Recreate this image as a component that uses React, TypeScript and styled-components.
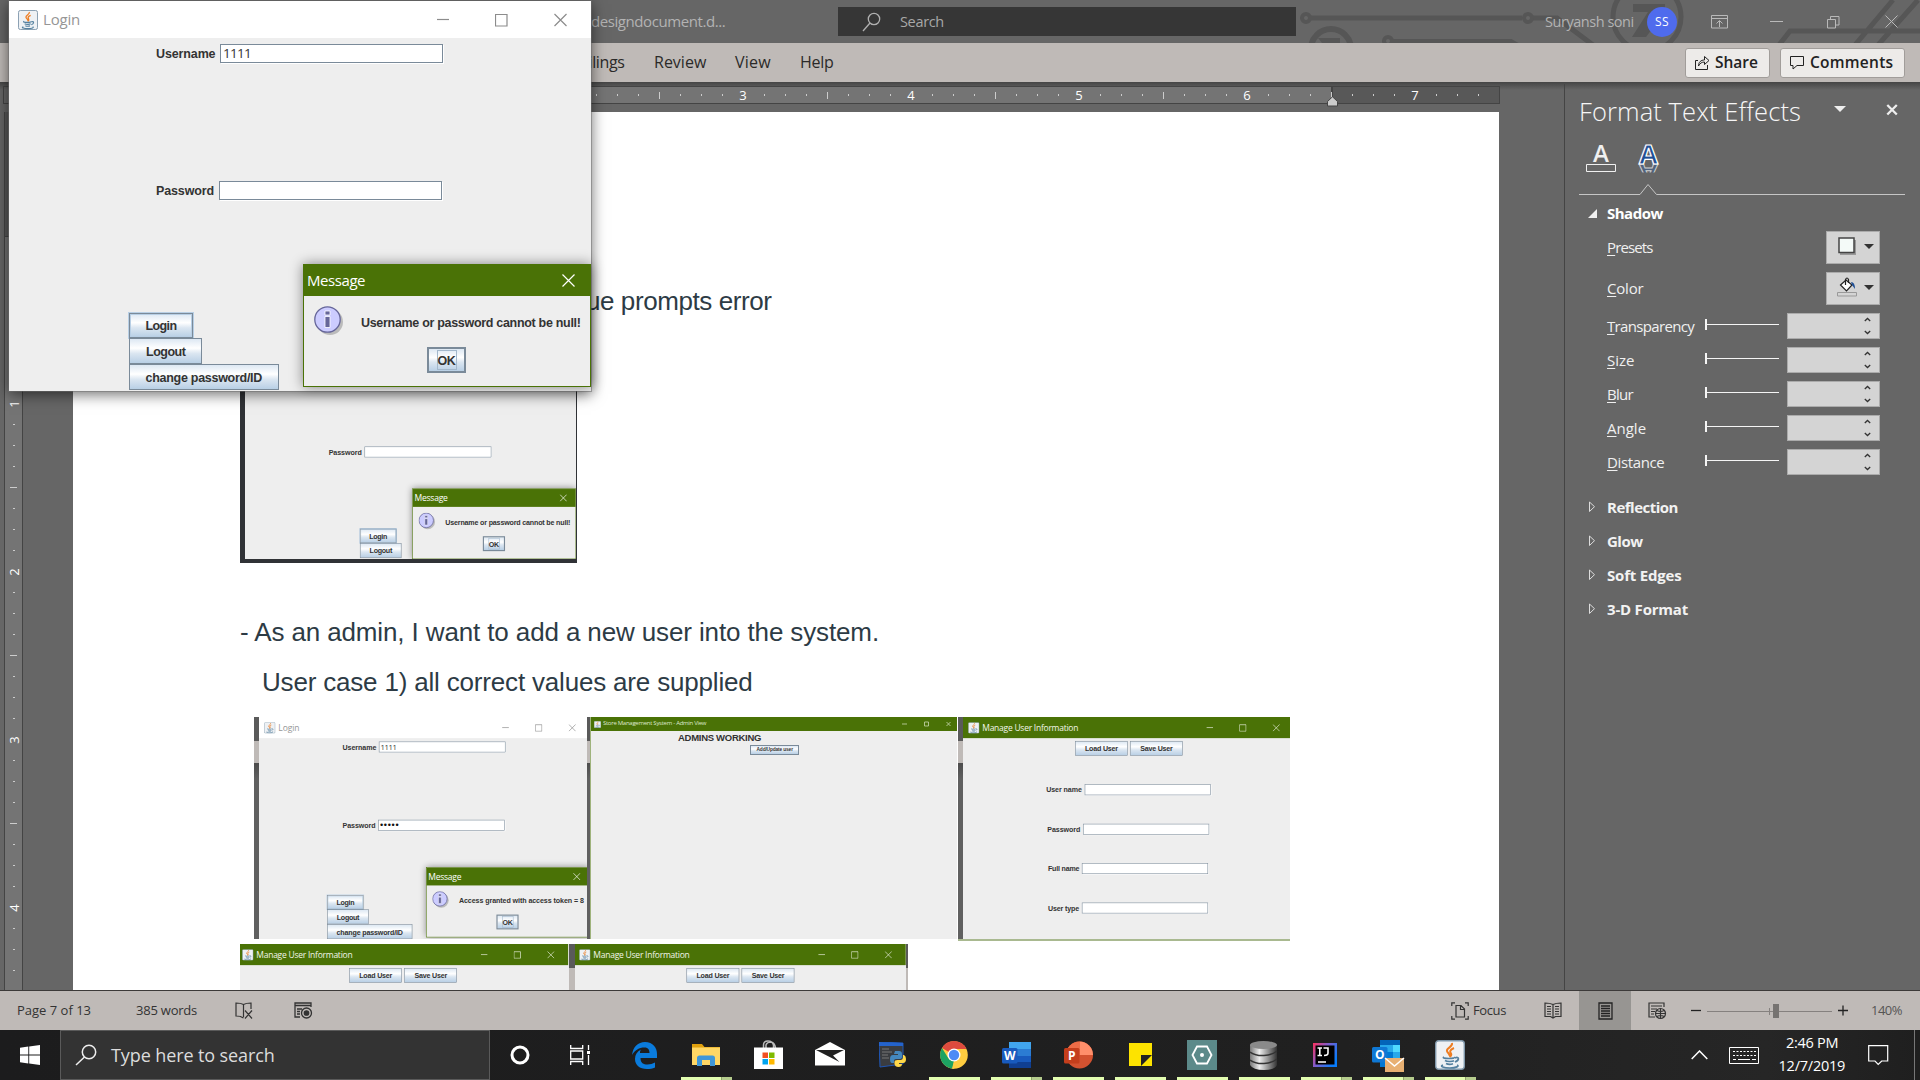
import React, { useLayoutEffect, useRef, useState } from "react";
import styled, { createGlobalStyle, css } from "styled-components";

const UI = `"Open Sans", "Noto Sans", sans-serif`;
const ARIAL = `"Liberation Sans", Arial, sans-serif`;

const Global = createGlobalStyle`
  * { box-sizing: border-box; }
  html, body { margin: 0; padding: 0; overflow: hidden; background: #666; }
  svg { display: block; flex: none; }
`;

/* ---------- text that fills a given width ---------- */

const TextBox = styled.span<{ $w: number; $size: number; $color: string; $weight: number; $font: string; $ml: number; $down: number }>`
  display: block;
  flex: none;
  width: ${(p) => p.$w}px;
  margin-left: ${(p) => p.$ml}px;
  padding-top: ${(p) => p.$down}px;
  font-family: ${(p) => p.$font};
  font-size: ${(p) => p.$size}px;
  font-weight: ${(p) => p.$weight};
  line-height: 1.3;
  color: ${(p) => p.$color};
  white-space: pre;
`;

type TextProps = {
  children: React.ReactNode; w: number; size: number; color?: string; weight?: number; font?: string; ml?: number; down?: number;
};

function Text({ children, w, size, color = "#fff", weight = 400, font = UI, ml = 0, down = 0 }: TextProps) {
  const ref = useRef<HTMLSpanElement>(null);
  const [spacing, setSpacing] = useState(0);
  useLayoutEffect(() => {
    const el = ref.current;
    if (!el) return;
    const n = (el.textContent || "").length;
    setSpacing((w - el.offsetWidth) / Math.max(1, n));
  }, [w]);
  return (
    <TextBox $w={w} $size={size} $color={color} $weight={weight} $font={font} $ml={ml} $down={down}>
      <span ref={ref} style={{ letterSpacing: spacing }}>{children}</span>
    </TextBox>
  );
}

/* ---------- shared frame ---------- */

const Screen = styled.div`
  position: relative;
  width: 1920px;
  height: 1080px;
  overflow: hidden;
  display: flex;
  flex-direction: column;
  background: #666;
  font-family: ${UI};
`;

const Slot = styled.div<{ $w?: number; $ml?: number; $mt?: number }>`
  flex: none;
  display: flex;
  align-items: center;
  justify-content: center;
  width: ${(p) => (p.$w ? p.$w + "px" : "auto")};
  margin-left: ${(p) => p.$ml || 0}px;
  margin-top: ${(p) => p.$mt || 0}px;
`;

/* ---------- Word title bar ---------- */

const TitleBar = styled.header`
  position: relative;
  flex: none;
  height: 43px;
  display: flex;
  align-items: center;
  background: #666;
`;
const Circuit = styled.svg`
  position: absolute;
  left: 1296px;
  top: 0;
`;
const SearchBox = styled.div`
  position: relative;
  flex: none;
  display: flex;
  align-items: center;
  width: 458px;
  height: 29px;
  margin-left: 113px;
  padding-left: 24px;
  background: #363636;
`;
const TitleRight = styled.div`
  position: relative;
  flex: 1;
  display: flex;
  align-items: center;
`;
const Avatar = styled.div`
  flex: none;
  display: flex;
  align-items: center;
  justify-content: center;
  width: 30px;
  height: 30px;
  margin-left: 13px;
  border-radius: 50%;
  background: #4f6bed;
`;

function WordTitle() {
  return (
    <TitleBar>
      <Circuit width="624" height="43" fill="none" stroke="#565656" strokeWidth="5">
        <circle cx="10" cy="18" r="4" strokeWidth="4" />
        <path d="M15 18H226M237 18H261L297 45" />
        <circle cx="232" cy="18" r="4" strokeWidth="4" />
        <circle cx="35" cy="49" r="20" strokeWidth="6" />
        <path d="M22 38H44V43H26Z" fill="#565656" stroke="none" />
        <circle cx="92" cy="41" r="4" strokeWidth="4" />
        <path d="M97 41H215L222 45" strokeWidth="4" />
        <circle cx="351" cy="17" r="34" />
        <path d="M337 4H369V12L350 37H336L352 12H337Z" fill="#565656" stroke="none" />
        <path d="M483 45L494 31H624M559 45L597 0M582 45L622 0" />
      </Circuit>
      <Text w={134} ml={591} size={15} color="#b3b3b3">designdocument.d...</Text>
      <SearchBox>
        <svg width="19" height="20" fill="none" stroke="#b0b0b0" strokeWidth="1.3">
          <circle cx="12" cy="7" r="5.7" /><path d="M8 11L1 19" />
        </svg>
        <Text w={44} ml={19} size={14.5} color="#a8a8a8" down={1}>Search</Text>
      </SearchBox>
      <TitleRight>
        <Text w={89} ml={249} size={14.5} color="#b3b3b3" down={1}>Suryansh soni</Text>
        <Avatar><Text w={14} size={12}>SS</Text></Avatar>
        <Slot $ml={34}>
          <svg width="17" height="14" fill="none" stroke="#b9b9b9"><path d="M.5 .5h16v12.5h-16zM.5 3.5h16M8.5 12V6M5.5 8.5l3-3 3 3" /></svg>
        </Slot>
        <Slot $ml={42}><svg width="13" height="3"><path d="M0 1.5h13" stroke="#b9b9b9" /></svg></Slot>
        <Slot $ml={44}>
          <svg width="13" height="14" fill="none" stroke="#b9b9b9"><path d="M.5 4.5h8v8.500h-8zM3.500 4.500V1.500h8.500v8.500H9" /></svg>
        </Slot>
        <Slot $ml={45}><svg width="13" height="13"><path d="M.5 .5l12 12M12.500 .5l-12 12" stroke="#b9b9b9" /></svg></Slot>
      </TitleRight>
    </TitleBar>
  );
}

/* ---------- ribbon ---------- */

const Ribbon = styled.nav`
  flex: none;
  display: flex;
  align-items: center;
  height: 39px;
  background: #bfbab7;
`;
const RibbonButton = styled.div<{ $w: number; $ml: number }>`
  flex: none;
  display: flex;
  align-items: center;
  width: ${(p) => p.$w}px;
  height: 30px;
  margin-left: ${(p) => p.$ml}px;
  padding-left: 9px;
  background: #edebe9;
  border: 1px solid #a19d9a;
  border-radius: 3px;
`;

function WordRibbon() {
  const c = "#2b2a29";
  return (
    <Ribbon>
      <Text w={59} ml={566} size={16} color={c}>Mailings</Text>
      <Text w={52} ml={29} size={16} color={c}>Review</Text>
      <Text w={36} ml={29} size={16} color={c}>View</Text>
      <Text w={34} ml={29} size={16} color={c}>Help</Text>
      <RibbonButton $w={85} $ml={851}>
        <svg width="15" height="15" fill="none" stroke="#222"><path d="M3 5.500H.5v9h12V10M3.500 11C3.500 7 6 5 9.500 5V1.500l4.500 4-4.500 4V7C7 7 5 8 3.500 11z" /></svg>
        <Text w={43} ml={5} size={15.500} weight={600} color="#222">Share</Text>
      </RibbonButton>
      <RibbonButton $w={125} $ml={10}>
        <svg width="15" height="14" fill="none" stroke="#222"><path d="M.5 .5h13v9H7l-4 3.500V9.500H.5z" /></svg>
        <Text w={83} ml={5} size={15.500} weight={600} color="#222">Comments</Text>
      </RibbonButton>
    </Ribbon>
  );
}

/* ---------- rulers ---------- */

const Workspace = styled.main`
  flex: none;
  display: flex;
  height: 908px;
  overflow: hidden;
  background: linear-gradient(#454545, #666 8px);
`;
const Editor = styled.section`
  flex: none;
  width: 1564px;
  display: flex;
  flex-direction: column;
`;
const RulerRow = styled.div`
  flex: none;
  display: flex;
  height: 30px;
  padding: 4px 0 8px 3px;
`;
const TabSelector = styled.div`
  width: 21px;
  border: 1px solid #454545;
`;
const HRuler = styled.div`
  position: relative;
  display: flex;
  width: 1427px;
  margin-left: 49px;
  padding-left: 7.500px;
  border: 1px solid #444;
  background: linear-gradient(90deg, #747474 1257px, #444 1257px, #444 1259px, #585858 1259px);
`;
const HCell = styled.div`
  flex: none;
  display: flex;
  align-items: center;
  justify-content: center;
  width: 21px;
  font-size: 13px;
  color: #fff;
`;
const HTick = styled.i<{ $long: boolean }>`
  width: 1px;
  height: ${(p) => (p.$long ? 7 : 2)}px;
  background: #ccc;
`;
const IndentMark = styled.svg`
  position: absolute;
  left: 1252px;
  top: 9px;
`;
const PageRow = styled.div`
  flex: 1;
  min-height: 0;
  display: flex;
`;
const VRuler = styled.div`
  flex: none;
  width: 19px;
  margin-left: 4px;
  padding-top: 8px;
  border: solid #444;
  border-width: 0 1px;
  background: linear-gradient(#585858 124px, #444 124px, #444 125px, #747474 125px);
`;
const VCell = styled.div`
  display: flex;
  align-items: center;
  justify-content: center;
  height: 21px;
  font-size: 13px;
  color: #fff;
`;
const VTick = styled.i<{ $long: boolean }>`
  width: ${(p) => (p.$long ? 7 : 2)}px;
  height: 1px;
  background: #ccc;
`;
const Turned = styled.span`
  transform: rotate(-90deg);
`;

const range = (a: number, b: number) => Array.from({ length: b - a + 1 }, (_, i) => a + i);

/* ---------- Swing windows ---------- */

const Frame = styled.div<{ $w: number; $h: number }>`
  position: relative;
  width: ${(p) => p.$w}px;
  height: ${(p) => p.$h}px;
  background: #eee;
`;
const FrameTitle = styled.div<{ $green: boolean }>`
  display: flex;
  align-items: center;
  height: 37px;
  padding-left: 9px;
  background: ${(p) => (p.$green ? "#4a7206" : "#fff")};
`;
const Controls = styled.div`
  flex: 1;
  display: flex;
  align-items: center;
  justify-content: flex-end;
  gap: 46px;
  padding-right: 24px;
`;

function JavaIcon({ s }: { s: number }) {
  return (
    <svg width={s} height={s} viewBox="0 0 30 30" fill="none">
      <rect x=".7" y=".7" width="28.600" height="28.600" rx="3" fill="#eef1f4" stroke="#7f97aa" strokeWidth="1.400" />
      <path d="M17 3c1 4-6 5-5 8 .5 2 3 2.500 2.500 5M19 8c-5 2-4 4-3 5.500.8 1.500 0 2.500-1.500 3.500" stroke="#ee7d22" strokeWidth="2" />
      <path d="M9 17c-2 1 1 1.500 5 1.500S20 18 19 17M10 20.500c2 1.300 7 1.300 9 .3M11 23.500c2 1 5 1 7 .3M8 25c-4 1.500 1 3 7 3s10-2 7-3M20 18c4-2 5 2 0 4" stroke="#54809f" strokeWidth="1.700" />
    </svg>
  );
}

function FrameBar({ green, title, w }: { green: boolean; title: string; w: number }) {
  const c = green ? "#e6eedb" : "#8c8c8c";
  return (
    <FrameTitle $green={green}>
      <JavaIcon s={20} />
      <Text w={w} ml={5} size={15} color={green ? "#f2f6ea" : "#969696"}>{title}</Text>
      <Controls>
        <svg width="12" height="14"><path d="M0 6.500h12" stroke={c} strokeWidth="1.200" /></svg>
        <svg width="13" height="14" fill="none"><path d="M.5 1.500h11.500v11.500h-11.500z" stroke={c} strokeWidth="1.200" /></svg>
        <svg width="13" height="14"><path d="M.5 1l12 12M12.500 1l-12 12" stroke={c} strokeWidth="1.200" /></svg>
      </Controls>
    </FrameTitle>
  );
}

const FormRow = styled.div<{ $mt: number; $pl: number; $gap: number }>`
  display: flex;
  align-items: center;
  height: 20px;
  margin-top: ${(p) => p.$mt}px;
  padding-left: ${(p) => p.$pl}px;
  gap: ${(p) => p.$gap}px;
`;
const Field = styled.div`
  flex: none;
  display: flex;
  align-items: center;
  width: 223px;
  height: 19px;
  padding-left: 2px;
  background: #fff;
  border: 1px solid #7a8a99;
  box-shadow: 1px 1px 0 #fff;
`;
const Buttons = styled.div<{ $top: number; $left: number }>`
  position: absolute;
  left: ${(p) => p.$left}px;
  top: ${(p) => p.$top}px;
`;
const SwingButton = styled.div<{ $w: number; $h?: number; $strong?: boolean; $halo?: boolean }>`
  flex: none;
  display: flex;
  align-items: center;
  justify-content: center;
  width: ${(p) => p.$w}px;
  height: ${(p) => p.$h || 26}px;
  border: ${(p) => (p.$strong ? 2 : 1)}px solid #7a8a99;
  background: linear-gradient(#dde8f3, #fff 38%, #dbe6f1 60%, #b8cfe5);
  ${(p) => p.$halo && css`box-shadow: inset 0 0 0 1px #b8cfe5, 0 0 0 1px #b8cfe5;`}
`;
const FocusRing = styled.div`
  padding: 0;
  border: 1px solid #a3b8cc;
`;
const DialogBox = styled.div<{ $top: number }>`
  position: absolute;
  left: 294px;
  top: ${(p) => p.$top}px;
  width: 288px;
  height: 123px;
  border: 1px solid #4a7206;
  background: #eee;
  box-shadow: 0 0 12px rgba(0, 0, 0, 0.45);
`;
const DialogTitle = styled.div`
  display: flex;
  align-items: center;
  height: 31px;
  padding-left: 3px;
  background: #4a7206;
`;
const DialogBody = styled.div`
  display: flex;
  align-items: flex-start;
  height: 51px;
  padding: 10px 0 0 10px;
`;
const DialogFoot = styled.div`
  display: flex;
  padding-left: 123px;
`;

const J = "#333";

function Label({ w, children }: { w: number; children: string }) {
  return <Text w={w} size={12.500} weight={700} font={ARIAL} color={J} down={2}>{children}</Text>;
}

function MessageBox({ top, text }: { top: number; text: string }) {
  return (
    <DialogBox $top={top}>
      <DialogTitle>
        <Text w={58} size={15}>Message</Text>
        <Slot $ml={197}><svg width="13" height="13"><path d="M.5 .5l12 12M12.500 .5l-12 12" stroke="#fff" strokeWidth="1.200" /></svg></Slot>
      </DialogTitle>
      <DialogBody>
        <svg width="31" height="31">
          <circle cx="16" cy="16" r="13" fill="#999" opacity=".6" />
          <circle cx="13.500" cy="13.500" r="12.700" fill="#ccccff" stroke="#666699" strokeWidth="1.300" />
          <path d="M11 5h5v4h-5zM11 10.500h5v11h-5z" fill="#666699" stroke="#fff" strokeWidth=".8" />
        </svg>
        <Slot $ml={16} $mt={7}><Label w={220}>{text}</Label></Slot>
      </DialogBody>
      <DialogFoot>
        <SwingButton $w={39} $strong>
          <FocusRing><Label w={18}>OK</Label></FocusRing>
        </SwingButton>
      </DialogFoot>
    </DialogBox>
  );
}

function LoginWindow({
  h = 390, buttonsTop = 312, buttonsLeft = 120, dialogTop = 263, dots = false, short = false,
  text = "Username or password cannot be null!",
}) {
  return (
    <Frame $w={582} $h={h}>
      <FrameBar green={false} title="Login" w={37} />
      <FormRow $mt={5} $pl={147} $gap={5}>
        <Label w={59}>Username</Label>
        <Field><Text w={28} size={13.500} color={J} down={1}>1111</Text></Field>
      </FormRow>
      <FormRow $mt={117} $pl={147} $gap={5}>
        <Label w={58}>Password</Label>
        <Field>{dots && <Text w={34} size={16} font={ARIAL} color="#111">•••••</Text>}</Field>
      </FormRow>
      <Buttons $top={buttonsTop} $left={buttonsLeft}>
        <SwingButton $w={64} $h={25} $halo><Label w={31}>Login</Label></SwingButton>
        <SwingButton $w={73}><Label w={39}>Logout</Label></SwingButton>
        {!short && <SwingButton $w={150}><Label w={117}>change password/ID</Label></SwingButton>}
      </Buttons>
      <MessageBox top={dialogTop} text={text} />
    </Frame>
  );
}

const ButtonPair = styled.div`
  display: flex;
  gap: 4px;
  padding: 5px 0 0 198px;
`;

function ManageWindow({ form = true }: { form?: boolean }) {
  const rows = [
    { label: "User name", pl: 147, w: 63 },
    { label: "Password", pl: 149, w: 58 },
    { label: "Full name", pl: 150, w: 55 },
    { label: "User type", pl: 150, w: 55 },
  ];
  return (
    <Frame $w={584} $h={form ? 389 : 82}>
      <FrameBar green title="Manage User Information" w={170} />
      <ButtonPair>
        <SwingButton $w={93}><Label w={58}>Load User</Label></SwingButton>
        <SwingButton $w={93}><Label w={57}>Save User</Label></SwingButton>
      </ButtonPair>
      {form && rows.map((r) => (
        <FormRow key={r.label} $mt={49} $pl={r.pl} $gap={5}>
          <Label w={r.w}>{r.label}</Label>
          <Field />
        </FormRow>
      ))}
    </Frame>
  );
}

/* ---------- document ---------- */

const Page = styled.article`
  flex: none;
  width: 1426px;
  margin-left: 50px;
  padding-left: 167px;
  background: #fff;
  overflow: hidden;
`;
const Line = styled.div<{ $h: number; $pl?: number; $pt?: number }>`
  display: flex;
  align-items: center;
  height: ${(p) => p.$h}px;
  padding-left: ${(p) => p.$pl || 0}px;
  padding-top: ${(p) => p.$pt || 0}px;
`;
const PictureRow = styled.div<{ $pl?: number; $h: number; $mt?: number }>`
  display: flex;
  align-items: flex-start;
  height: ${(p) => p.$h}px;
  margin-top: ${(p) => p.$mt || 0}px;
  padding-left: ${(p) => p.$pl || 0}px;
`;
const Picture = styled.div<{ $w: number; $h: number; $left: number; $bottom?: string }>`
  flex: none;
  width: ${(p) => p.$w}px;
  height: ${(p) => p.$h}px;
  padding-left: ${(p) => p.$left}px;
  overflow: hidden;
  background: linear-gradient(#5a5a5a 24px, #bfbab7 24px, #bfbab7 46px, #4c4c4c 46px, #606060 62px);
  border-bottom: ${(p) => p.$bottom || "none"};
`;
const DarkPicture = styled(Picture)`
  background: #303236;
`;
const Shrink = styled.div<{ $w: number; $h: number; $sx: number; $sy: number; $shift?: number }>`
  width: ${(p) => p.$w}px;
  height: ${(p) => p.$h}px;
  overflow: hidden;
  background: #eee;
  > * {
    margin-left: ${(p) => p.$shift || 0}px;
    transform: scale(${(p) => p.$sx}, ${(p) => p.$sy});
    transform-origin: 0 0;
  }
`;
const Admin = styled.div`
  flex: none;
  width: 367px;
  height: 222px;
  background: #eee;
  border-left: 1px solid #9fb37c;
`;
const AdminTitle = styled.div`
  display: flex;
  align-items: center;
  height: 14px;
  padding-left: 3px;
  background: #4a7206;
`;
const AdminHeading = styled.div`
  padding: 1px 0 1px 87px;
`;
const AdminButton = styled(SwingButton)`
  margin-left: 159px;
`;
const OverlapLine = styled.div`
  height: 40px;
  margin: -61px 0 21px;
  display: flex;
  align-items: center;
`;

const ink = "#2d3b45";

function Document() {
  return (
    <Page>
      <Line $h={231} />
      <OverlapLine><Text w={217} ml={314} size={26} font={ARIAL} color={ink}>value prompts error</Text></OverlapLine>
      <DarkPicture $w={337} $h={220} $left={5}>
        <Shrink $w={331} $h={216} $sx={0.569} $sy={0.575}>
          <LoginWindow h={377} buttonsTop={323} buttonsLeft={202} dialogTop={253} short />
        </Shrink>
      </DarkPicture>
      <Line $h={43} />
      <Line $h={52} $pt={2}><Text w={639} size={26} font={ARIAL} color={ink}>- As an admin, I want to add a new user into the system.</Text></Line>
      <Line $h={48} $pl={22} $pt={2}><Text w={491} size={26} font={ARIAL} color={ink}>User case 1) all correct values are supplied</Text></Line>
      <PictureRow $h={227} $pl={14} $mt={11}>
        <Picture $w={336} $h={222} $left={5}>
          <Shrink $w={328} $h={222} $sx={0.568} $sy={0.571}>
            <LoginWindow text="Access granted with access token = 8" dots />
          </Shrink>
        </Picture>
        <Admin>
          <AdminTitle>
            <JavaIcon s={7} />
            <Text w={103} ml={2} size={6} color="#dfe8cf">Store Management System - Admin View</Text>
            <Slot $ml={196}><svg width="50" height="6" fill="none" stroke="#c9d8b0" strokeWidth=".8"><path d="M0 3h5M22.500 1h4v4h-4zM44.500 1l4 4M48.500 1l-4 4" /></svg></Slot>
          </AdminTitle>
          <AdminHeading><Text w={83} size={9.500} weight={700} font={ARIAL} color={J}>ADMINS WORKING</Text></AdminHeading>
          <AdminButton $w={49} $h={10}><Text w={36} size={4.800} weight={700} font={ARIAL} color={J}>Add/Update user</Text></AdminButton>
        </Admin>
        <Slot $w={1} />
        <Picture $w={332} $h={224} $left={5} $bottom="2px solid #a9b990">
          <Shrink $w={327} $h={222} $sx={0.566} $sy={0.571}><ManageWindow /></Shrink>
        </Picture>
      </PictureRow>
      <PictureRow $h={46}>
        <Picture $w={335} $h={46} $left={0}>
          <Shrink $w={329} $h={46} $sx={0.567} $sy={0.571} $shift={-3}><ManageWindow form={false} /></Shrink>
        </Picture>
        <Picture $w={333} $h={46} $left={0}>
          <Shrink $w={331} $h={46} $sx={0.568} $sy={0.571} $shift={-1}><ManageWindow form={false} /></Shrink>
        </Picture>
      </PictureRow>
    </Page>
  );
}

/* ---------- Format Text Effects pane ---------- */

const Pane = styled.aside`
  flex: none;
  width: 356px;
  margin-top: 2px;
  padding-left: 14px;
  border-left: 1px solid #444;
`;
const PaneHead = styled.div`
  display: flex;
  align-items: center;
  height: 56px;
`;
const PaneTabs = styled.div`
  display: flex;
  height: 60px;
`;
const Section = styled.div<{ $h: number }>`
  display: flex;
  align-items: center;
  height: ${(p) => p.$h}px;
  padding-left: 9px;
`;
const Option = styled.div<{ $h: number }>`
  display: flex;
  align-items: center;
  height: ${(p) => p.$h}px;
  padding-left: 28px;
`;
const LabelCell = styled.div<{ $w: number }>`
  flex: none;
  width: ${(p) => p.$w}px;
`;
const DropButton = styled.div`
  flex: none;
  display: flex;
  align-items: center;
  justify-content: space-between;
  width: 54px;
  height: 33px;
  padding: 0 5px 3px 10px;
  background: #d4d4d4;
  border: 1px solid #ababab;
`;
const Spin = styled.div`
  flex: none;
  display: flex;
  align-items: center;
  justify-content: flex-end;
  width: 93px;
  height: 26px;
  margin-left: 8px;
  padding-right: 8px;
  background: #d4d4d4;
  border: 1px solid #ababab;
`;
const Accel = styled.span`
  text-decoration: underline;
  text-underline-offset: 2px;
  text-decoration-thickness: 1px;
`;

function Accelerated({ text, w }: { text: string; w: number }) {
  return <Text w={w} size={15} color="#f0f0f0" down={1}><Accel>{text[0]}</Accel>{text.slice(1)}</Text>;
}
const Arrow = () => <svg width="10" height="5"><path d="M0 0h10L5 5z" fill="#333" /></svg>;

function FormatPane() {
  const sliders: [string, number][] = [["Transparency", 87], ["Size", 27], ["Blur", 26], ["Angle", 39], ["Distance", 57]];
  const sections: [string, number][] = [["Reflection", 71], ["Glow", 36], ["Soft Edges", 74], ["3-D Format", 81]];
  return (
    <Pane>
      <PaneHead>
        <Text w={222} size={25.500} weight={300} color="#f7f7f7">Format Text Effects</Text>
        <Slot $ml={33}><svg width="12" height="18"><path d="M0 3h12L6 9z" fill="#eee" /></svg></Slot>
        <Slot $ml={40}><svg width="12" height="18"><path d="M1.300 2l9.500 9.500M10.800 2l-9.500 9.500" stroke="#eee" strokeWidth="2.300" /></svg></Slot>
      </PaneHead>
      <PaneTabs>
        <svg width="327" height="56" fill="none">
          <defs><clipPath id="below"><path d="M50 24h40v8.500h-40z" /></clipPath></defs>
          <text x="14" y="22" fontFamily="Open Sans" fontWeight="600" fontSize="24" fill="#f0f0f0">A</text>
          <path d="M7.500 24.500h29v7h-29z" stroke="#f0f0f0" />
          <g fontFamily="Open Sans" fontWeight="700" fontSize="27">
            <g clipPath="url(#below)">
              <text transform="translate(60 24) scale(1 -.8)" fill="#51647f" stroke="#d0d0d0" strokeWidth="1" textLength="19" lengthAdjust="spacingAndGlyphs">A</text>
            </g>
            <text x="60" y="24" fill="#1f4f96" stroke="#fff" strokeWidth="1.200" textLength="19" lengthAdjust="spacingAndGlyphs">A</text>
          </g>
          <path d="M0 54.500H61L69 44.500L77.500 54.500H326" stroke="#c6c6c6" />
        </svg>
      </PaneTabs>
      <Section $h={27}>
        <svg width="9" height="9"><path d="M9 0v9H0z" fill="#f0f0f0" /></svg>
        <Text w={56} ml={10} size={15} weight={700} down={1}>Shadow</Text>
      </Section>
      <Option $h={41}>
        <LabelCell $w={219}><Accelerated text="Presets" w={46} /></LabelCell>
        <DropButton>
          <svg width="19" height="18"><path d="M3 3h16v15H3z" fill="#999" /><path d="M2 1h15v14.500H2z" fill="#f4faf8" stroke="#444" strokeWidth="1.500" /></svg>
          <Arrow />
        </DropButton>
      </Option>
      <Option $h={41}>
        <LabelCell $w={219}><Accelerated text="Color" w={36} /></LabelCell>
        <DropButton>
          <svg width="20" height="20" fill="none">
            <path d="M3.500 8L9 3l6 5-5.500 6z" fill="#fff" stroke="#222" strokeWidth="1.200" />
            <path d="M8.500 8V2.500q1.500-3 3 0V6" stroke="#222" strokeWidth="1.200" />
            <path d="M14 5q4 0 4 7l-3-4z" fill="#1f4f96" />
            <path d="M.5 15.500h19v3.500h-19z" stroke="#999" />
          </svg>
          <Arrow />
        </DropButton>
      </Option>
      {sliders.map(([t, w]) => (
        <Option key={t} $h={34}>
          <LabelCell $w={98}><Accelerated text={t} w={w} /></LabelCell>
          <svg width="74" height="14"><path d="M1 0v11" stroke="#f5f5f5" strokeWidth="2" /><path d="M1 5.500h73" stroke="#f5f5f5" /></svg>
          <Spin><svg width="7" height="18" fill="none" stroke="#333" strokeWidth="1.300"><path d="M.8 4L3.500 1.500l2.700 2.500M.8 14l2.700 2.500 2.700-2.500" /></svg></Spin>
        </Option>
      ))}
      <Slot $mt={11} />
      {sections.map(([t, w]) => (
        <Section key={t} $h={34}>
          <svg width="9" height="13" fill="none"><path d="M1.500 1v9.500l5-4.800z" stroke="#ddd" /></svg>
          <Text w={w} ml={10} size={15} weight={700} color="#f2f2f2" down={1}>{t}</Text>
        </Section>
      ))}
    </Pane>
  );
}

/* ---------- status bar ---------- */

const StatusBar = styled.footer`
  flex: none;
  display: flex;
  align-items: center;
  height: 40px;
  border-top: 1px solid #3c3a39;
  background: #bfbab7;
`;
const ActiveView = styled.div`
  flex: none;
  display: flex;
  align-items: center;
  justify-content: center;
  width: 52px;
  height: 40px;
  margin-left: 17px;
  background: #979592;
`;

function WordStatus() {
  const c = "#333";
  return (
    <StatusBar>
      <Text w={74} ml={17} size={13} color={c}>Page 7 of 13</Text>
      <Text w={61} ml={45} size={13} color={c}>385 words</Text>
      <Slot $ml={38}>
        <svg width="18" height="17" fill="none" stroke={c} strokeWidth="1.200"><path d="M8.500 3V15M8.500 2.500Q6 1 1 1v13q5 0 7.500 2M8.500 2.500Q11 1 16 1v6M10 8.500l7 8M17 8.500l-7 8" /></svg>
      </Slot>
      <Slot $ml={41}>
        <svg width="19" height="17" fill="none" stroke={c} strokeWidth="1.300"><path d="M6 15H1V1h16v4M1 3.500h16M3 7h5M3 9.500h3M3 12h3" /><circle cx="12.500" cy="11" r="5" /><circle cx="12.500" cy="11" r="2.200" fill={c} /></svg>
      </Slot>
      <Slot $ml={1138}>
        <svg width="18" height="18" fill="none" stroke={c} strokeWidth="1.200"><path d="M4 .8H.8V4M14 .8h3.200V4M.8 14v3.200H4M17.200 14v3.200H14M5 3.500h5l3.500 3.500v8H5zM9.500 3.500V7.500h4" /></svg>
      </Slot>
      <Text w={33} ml={4} size={13} color={c}>Focus</Text>
      <Slot $ml={38}>
        <svg width="18" height="17" fill="none" stroke={c} strokeWidth="1.200"><path d="M9 2.500V16M9 2.500Q6 1 1 1v13.500h5.500L9 16l2.500-1.500H17V1Q12 1 9 2.500M3 4.500h4M3 7h4M3 9.500h4M3 12h4M11 4.500h4M11 7h4M11 9.500h4M11 12h4" /></svg>
      </Slot>
      <ActiveView>
        <svg width="15" height="18" fill="none" stroke="#222" strokeWidth="1.300"><path d="M1 1h13v16H1zM3 4h9M3 6.500h9M3 9h9M3 11.500h9M3 14h9" /></svg>
      </ActiveView>
      <Slot $ml={17}>
        <svg width="19" height="18" fill="none" stroke={c} strokeWidth="1.200"><path d="M7 15H1V1h15v4M3 4h11M3 7h6M3 9.500h4M3 12h3" /><circle cx="12.500" cy="11.500" r="5" /><path d="M7.500 11.500h10M12.500 6.500v10M9 8.500q3.500 2 7 0M9 14.500q3.500-2 7 0" /></svg>
      </Slot>
      <Slot $ml={24}><svg width="10" height="4"><path d="M0 1.500h10" stroke="#222" strokeWidth="1.300" /></svg></Slot>
      <Slot $ml={6}>
        <svg width="125" height="14"><path d="M0 7.500h125M62.500 4v7" stroke="#85817f" /><path d="M66 0h6v14h-6z" fill="#767371" /></svg>
      </Slot>
      <Slot $ml={6}><svg width="10" height="12"><path d="M0 5.500h10M5 .5v10" stroke="#222" strokeWidth="1.300" /></svg></Slot>
      <Text w={31} ml={23} size={13} color="#555">140%</Text>
    </StatusBar>
  );
}

/* ---------- Windows taskbar ---------- */

const Taskbar = styled.div`
  flex: none;
  display: flex;
  height: 50px;
  background: linear-gradient(90deg, #1c1c1d, #202020 70%, #262626 92%, #1f1f1f);
`;
const TaskSearch = styled.div`
  flex: none;
  display: flex;
  align-items: center;
  width: 430px;
  padding-left: 14px;
  background: #333;
  border: 1px solid #5a5a5a;
`;
const TaskCell = styled.div<{ $w?: number; $run?: "one" | "many" }>`
  flex: none;
  display: flex;
  align-items: center;
  justify-content: center;
  width: ${(p) => p.$w || 62}px;
  height: 50px;
  ${(p) => p.$run && css`
    background: linear-gradient(90deg, #e2fdb0 40px, ${p.$run === "many" ? "#8fa36c 40px, #8fa36c 41px, #b5cc8d 41px" : "#e2fdb0 40px"}) no-repeat 6px 47px / 51px 3px;
  `}
`;
const Clock = styled.div`
  flex: none;
  display: flex;
  flex-direction: column;
  align-items: center;
  justify-content: center;
  gap: 3px;
  width: 68px;
  margin-left: 19px;
`;
const DesktopEdge = styled.div`
  width: 1px;
  margin-left: 25px;
  background: #777;
`;

function OfficeTile({ letter, color }: { letter: string; color: string }) {
  return (
    <>
      <rect x="0" y="7" width="15.500" height="15.500" rx="1.500" fill={color} />
      <text x="7.700" y="19" textAnchor="middle" fontFamily="Open Sans" fontWeight="700" fontSize="12" fill="#fff">{letter}</text>
    </>
  );
}

function WindowsTaskbar() {
  return (
    <Taskbar>
      <TaskCell $w={60}>
        <svg width="20" height="20" fill="#fff"><path d="M0 2.800L8.300 1.600V9.600H0zM9.200 1.500L20 0V9.600H9.200zM0 10.400H8.300V18.400L0 17.200zM9.200 10.400H20V20L9.200 18.500z" /></svg>
      </TaskCell>
      <TaskSearch>
        <svg width="22" height="22" fill="none" stroke="#eee" strokeWidth="1.500"><circle cx="14" cy="8" r="6.700" /><path d="M9.500 13L1 21" /></svg>
        <Text w={164} ml={14} size={18} color="#dcdcdc" down={2}>Type here to search</Text>
      </TaskSearch>
      <TaskCell $w={60}><svg width="20" height="20" fill="none"><circle cx="10" cy="10" r="8" stroke="#fff" strokeWidth="3" /></svg></TaskCell>
      <TaskCell $w={60}>
        <svg width="20" height="20" fill="none" stroke="#fff" strokeWidth="1.300"><path d="M.7 0v3.500h12V0M.7 6h12v8h-12zM.7 20v-3.500h12V20M18.500 0v5M18.500 10v10" /><path d="M17 6h3v3h-3z" fill="#fff" stroke="none" /></svg>
      </TaskCell>
      <Slot $w={3} />
      <TaskCell>
        <svg width="25" height="27" viewBox="0 0 25 27"><path d="M0 13C1 5 6 0 13 0c8 0 12 6 12 12v4H8.500c0 5 3 6.500 7 6.500 3 0 5-.8 7.500-2V25.500C20.500 26.500 18 27 15 27 7.500 27 3 23 3 17c0-4 2-7.500 6-9.500-1 1.300-1 2.500-1 3.500h9.500c0-3-1-5.500-5-5.500C7 5.500 3 8 0 13z" fill="#0a7bdc" /></svg>
      </TaskCell>
      <TaskCell $run="many">
        <svg width="28" height="24"><path d="M0 1h10l2.500 3H28v18H0z" fill="#e0a00d" /><path d="M0 4.500h28v17.500H0z" fill="#ffd765" /><path d="M5 23V15q0-2.500 2.500-2.500h13q2.500 0 2.500 2.500v8h-5v-6h-8v6z" fill="#3f97d8" /></svg>
      </TaskCell>
      <TaskCell>
        <svg width="29" height="30"><path d="M9.500 8V5q0-4 4.500-4t5.500 4v3M12 8V5q1-3 5-3 4 1 4.500 6" fill="none" stroke="#bbb" strokeWidth="1.500" /><path d="M0 7.500h29V29H0z" fill="#fff" /><path d="M8.500 12.500h5.500v5.500H8.500z" fill="#f25022" /><path d="M15 12.500h5.500v5.500H15z" fill="#7fba00" /><path d="M8.500 19h5.500v5.500H8.500z" fill="#00a4ef" /><path d="M15 19h5.500v5.500H15z" fill="#ffb900" /></svg>
      </TaskCell>
      <TaskCell>
        <svg width="30" height="26"><path d="M0 8L15 0l15 8v15.500H0z" fill="#fff" /><path d="M1 8l28 0-11 5.500 6.500 6.500z" fill="#1f1f1f" /></svg>
      </TaskCell>
      <TaskCell>
        <svg width="27" height="26"><path d="M0 0l24 1v21L1 25z" fill="#3a3c40" stroke="#1f56b5" /><path d="M0 0l24 1v3H0z" fill="#2463cb" /><path d="M3 7h7M3 10h10M3 13h6M3 16h7" stroke="#777" /><path d="M16 9h4q3 0 3 3v3q0 2-3 2h-3q-2 0-2 2v2h-2q-2 0-2-4t3-4h5v-1h-4z" fill="#4487bd" /><path d="M24 13h1q2 1 2 4 0 4-3 4h-4v1h3q0 3-3.500 3t-4-3v-2q0-2 3-2h3q2.500 0 2.500-3z" fill="#ffd848" /></svg>
      </TaskCell>
      <TaskCell $run="one">
        <svg width="28" height="28" viewBox="0 0 28 28"><circle cx="14" cy="14" r="13.800" fill="#ffcd40" /><path d="M14 14L2 7A13.800 13.800 0 0 1 26.500 8H14z" fill="#dd4b3e" /><path d="M2 7l6.500 10.500L14 20 12.500 27.700A13.800 13.800 0 0 1 2 7z" fill="#1da362" /><path d="M14 20l6-6-6 13.800H12z" fill="#ffcd40" /><circle cx="14" cy="14" r="6.500" fill="#fff" /><circle cx="14" cy="14" r="5.200" fill="#4c8bf5" /></svg>
      </TaskCell>
      <TaskCell $run="many">
        <svg width="29" height="28"><path d="M7 1h22v7H7z" fill="#41a5ee" /><path d="M7 8h22v7H7z" fill="#2b7cd3" /><path d="M7 15h22v6H7z" fill="#185abd" /><path d="M7 21h22v6H7z" fill="#103f91" /><OfficeTile letter="W" color="#185abd" /></svg>
      </TaskCell>
      <TaskCell $run="one">
        <svg width="29" height="28"><circle cx="15.500" cy="14" r="13.500" fill="#d35230" /><path d="M15.500 .5A13.500 13.500 0 0 1 29 14H15.500z" fill="#ff8f6b" /><path d="M15.500 .5A13.500 13.500 0 0 0 2 14h13.500z" fill="#ed6c47" /><OfficeTile letter="P" color="#c43e1c" /></svg>
      </TaskCell>
      <TaskCell $run="one">
        <svg width="23" height="25"><path d="M0 0h23v23H0z" fill="#fde300" /><path d="M12 23V12h11z" fill="#222" /></svg>
      </TaskCell>
      <TaskCell $run="one">
        <svg width="30" height="30" fill="none"><path d="M0 0h30v30H0z" fill="#5c8a8a" /><path d="M10 6.500h10l4.500 8.500-4.500 8.500H10L5.500 15z" stroke="#fff" strokeWidth="1.800" /><circle cx="15" cy="15" r="2" fill="#fff" /></svg>
      </TaskCell>
      <TaskCell $run="one">
        <svg width="28" height="30">
          <defs><linearGradient id="db"><stop offset="0" stopColor="#777" /><stop offset=".35" stopColor="#eee" /><stop offset="1" stopColor="#333" /></linearGradient></defs>
          <path d="M0 5v20q3 5 14 5t13-5V5z" fill="url(#db)" /><ellipse cx="13.500" cy="5" rx="13.500" ry="4" fill="#8a8a8a" />
          <path d="M0 12q6 4 14 3.500T27 11M0 20q6 4 14 3.500T27 19" fill="none" stroke="#333" strokeWidth="1.500" />
        </svg>
      </TaskCell>
      <TaskCell $run="many">
        <svg width="26" height="24">
          <defs><linearGradient id="ij" x2="1" y2=".6"><stop offset="0" stopColor="#fe315d" /><stop offset=".5" stopColor="#7a5fd0" /><stop offset="1" stopColor="#087cfa" /></linearGradient></defs>
          <path d="M0 0h24v24H0z" fill="url(#ij)" /><path d="M2.500 2.500h19v19h-19z" fill="#000" />
          <path d="M4.500 5h4.500M6.800 5v7M4.500 12.500h4.500M10.500 5h4.500v5q0 2.500-4 2.500M5 19h8" fill="none" stroke="#fff" strokeWidth="1.600" />
        </svg>
      </TaskCell>
      <TaskCell $run="many">
        <svg width="32" height="30" viewBox="0 0 32 30" overflow="visible"><path d="M8 0h20v7H8z" fill="#0364b8" /><path d="M8 5h20v16H8z" fill="#28a8ea" /><path d="M21 5h7v7h-7z" fill="#50d9ff" /><path d="M8 12h13v15H8z" fill="#0078d4" /><OfficeTile letter="O" color="#0f78d4" /><path d="M13 18h19v14H13z" fill="#e8b073" /><path d="M13 18l9.500 8 9.500-8" fill="none" stroke="#fff" strokeWidth="1.500" /></svg>
      </TaskCell>
      <TaskCell $run="many"><JavaIcon s={30} /></TaskCell>
      <Slot $ml={210}><svg width="17" height="10" fill="none"><path d="M.7 9l7.800-8 7.800 8" stroke="#fff" strokeWidth="1.500" /></svg></Slot>
      <Slot $ml={21}>
        <svg width="30" height="17" fill="none" stroke="#fff"><path d="M.5 .5h29v16h-29z" /><path d="M4 4.500h23M4 8.500h23" strokeDasharray="2 1.500" /><path d="M4 12.500h3M9 12.500h12M23 12.500h4" /></svg>
      </Slot>
      <Clock>
        <Text w={52} size={14.500}>2:46 PM</Text>
        <Text w={67} size={14.500} down={1}>12/7/2019</Text>
      </Clock>
      <Slot $ml={22}><svg width="21" height="21" fill="none"><path d="M.7 .7h19v15.300h-6l-3.500 3.500L7 16H.7z" stroke="#fff" strokeWidth="1.200" /></svg></Slot>
      <DesktopEdge />
    </Taskbar>
  );
}

const FloatingWindow = styled.div`
  position: absolute;
  left: 9px;
  top: 1px;
  box-shadow: 0 0 0 1px rgba(110, 110, 110, 0.5), 0 3px 14px rgba(0, 0, 0, 0.6);
`;

export default function App() {
  return (
    <Screen>
      <Global />
      <WordTitle />
      <WordRibbon />
      <Workspace>
        <Editor>
          <RulerRow>
            <TabSelector />
            <HRuler>
              {range(-7, 59).map((k) => (
                <HCell key={k}>{k % 8 === 0 && k > 0 ? k / 8 : <HTick $long={k % 4 === 0} />}</HCell>
              ))}
              <IndentMark width="13" height="11"><path d="M1.500 10V5.500L6.500 .8l5 4.700V10z" fill="#ccc" stroke="#444" /></IndentMark>
            </HRuler>
          </RulerRow>
          <PageRow>
            <VRuler>
              {range(-5, 35).map((k) => (
                <VCell key={k}>{k % 8 === 0 && k > 0 ? <Turned>{k / 8}</Turned> : <VTick $long={k % 4 === 0} />}</VCell>
              ))}
            </VRuler>
            <Document />
          </PageRow>
        </Editor>
        <FormatPane />
      </Workspace>
      <WordStatus />
      <WindowsTaskbar />
      <FloatingWindow><LoginWindow /></FloatingWindow>
    </Screen>
  );
}
